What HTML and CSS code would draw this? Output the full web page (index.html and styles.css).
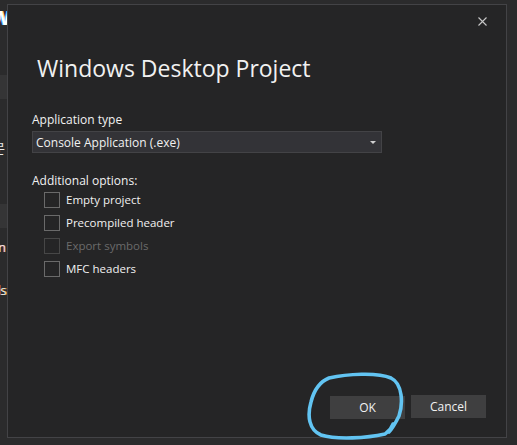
FILE: index.html
```html
<!DOCTYPE html>
<html lang="en">
  <head>
    <meta charset="UTF-8" />
    <title>Windows Desktop Project</title>
    <link rel="stylesheet" href="styles.css">
  </head>
  <body>
    <div class="screen">

      <!-- кусок окна студии слева -->
      <div class="behind">
        <div class="behind-logo">W</div>
        <div class="behind-band"></div>
        <div class="behind-text ko">문</div>
        <div class="behind-band second"></div>
        <div class="behind-text in">in</div>
        <div class="behind-text ls">ls</div>
      </div>

      <!-- сам диалог -->
      <div class="dialog">
        <div class="dialog-top">
          <svg class="close" width="9" height="9" viewBox="0 0 9 9">
            <path d="M0.5 0.5 L8.5 8.5 M8.5 0.5 L0.5 8.5" stroke="#c8c8c8" stroke-width="1.1" fill="none"/>
          </svg>
        </div>

        <h1 class="title">Windows Desktop Project</h1>

        <div class="field">
          <p class="label">Application type</p>
          <div class="select">
            <span>Console Application (.exe)</span>
            <span class="arrow"></span>
          </div>
        </div>

        <div class="field options">
          <p class="label">Additional options:</p>
          <label class="check"><span class="box"></span>Empty project</label>
          <label class="check"><span class="box"></span>Precompiled header</label>
          <label class="check disabled"><span class="box"></span>Export symbols</label>
          <label class="check"><span class="box"></span>MFC headers</label>
        </div>

        <div class="buttons">
          <div class="ok-wrap">
            <button class="btn">OK</button>
            <!-- обводка маркером -->
            <svg class="scribble" width="100" height="70" viewBox="0 0 100 70">
              <path d="M22 6 C40 2 70 0 84 6 C96 12 96 32 92 44 C88 52 86 56 82 60 M86 52 C84 58 80 60 78 62 C60 66 30 68 14 63 C2 58 0 44 4 30 C7 18 12 10 22 6"
                    stroke="#62c4f2" stroke-width="3.6" fill="none" stroke-linecap="round" stroke-linejoin="round"/>
            </svg>
          </div>
          <button class="btn">Cancel</button>
        </div>
      </div>

      <div class="behind-right"></div>
    </div>
  </body>
</html>
```

FILE: styles.css
```css
body {
  margin: 0;
  background-color: #2b2b2c;
  font-family: "Open Sans", "Noto Sans CJK KR", sans-serif;
  color: #f1f1f1;
}

.screen {
  display: flex;
  width: 517px;
  height: 445px;
  overflow: hidden;
}

/* фон позади диалога */
.behind {
  width: 7px;
  flex-shrink: 0;
  overflow: hidden;
  position: relative;
  background-color: #2b2b2c;
}

.behind-logo {
  position: absolute;
  left: -9px;
  top: 4px;
  font-size: 20px;
  font-weight: bold;
  color: #ffffff;
  text-shadow: -1px 0 #4fb3ff, 1px 0 #ffcf7a;
}

.behind-band {
  position: absolute;
  left: 0;
  top: 75px;
  width: 7px;
  height: 24px;
  background-color: #353536;
}

.behind-band.second {
  top: 204px;
}

.behind-text {
  position: absolute;
  font-size: 13px;
  color: #e8e8e8;
}

.behind-text.ko {
  left: -7px;
  top: 138px;
}

.behind-text.in {
  left: -5px;
  top: 238px;
  text-shadow: -1px 0 #e05a4a;
}

.behind-text.ls {
  left: -3px;
  top: 281px;
  text-shadow: 1px 0 #e0a040;
}

.behind-right {
  flex: 1;
  background-color: #2b2b2c;
}

.dialog {
  box-sizing: border-box;
  width: 500px;
  height: 434px;
  margin-top: 4px;
  flex-shrink: 0;
  background-color: #252526;
  border: 1px solid #434346;
  display: flex;
  flex-direction: column;
  padding: 0 20px 0 24px;
}

.dialog-top {
  display: flex;
  justify-content: flex-end;
  padding-top: 12px;
  height: 30px;
  box-sizing: border-box;
  margin-right: -1px;
}

.title {
  margin: 17px 0 0 5px;
  font-size: 23px;
  font-weight: normal;
  line-height: 32px;
  color: #f1f1f1;
}

.field {
  margin-top: 28px;
}

.label {
  margin: 0 0 3px 0;
  font-size: 12px;
  line-height: 16px;
}

.select {
  width: 350px;
  height: 22px;
  box-sizing: border-box;
  background-color: #333337;
  border: 1px solid #434346;
  display: flex;
  align-items: center;
  justify-content: space-between;
  padding: 0 4px 0 3px;
  font-size: 12px;
}

.arrow {
  width: 0;
  height: 0;
  border-left: 3px solid transparent;
  border-right: 3px solid transparent;
  border-top: 3px solid #d0d0d0;
  margin-right: 1px;
}

.options {
  margin-top: 21px;
}

.options .label {
  margin-bottom: 0;
  line-height: 14px;
}

.check {
  display: flex;
  align-items: center;
  height: 23px;
  padding-left: 12px;
  font-size: 11.5px;
}

.box {
  width: 16px;
  height: 16px;
  box-sizing: border-box;
  border: 1px solid #6a6a6a;
  margin-right: 6px;
}

.check.disabled {
  color: #6b6b6b;
}

.check.disabled .box {
  border-color: #474747;
}

.buttons {
  margin-top: auto;
  margin-bottom: 18px;
  display: flex;
  justify-content: flex-end;
  gap: 6px;
}

.ok-wrap {
  position: relative;
}

.btn {
  width: 75px;
  height: 23px;
  border: none;
  background-color: #3f3f40;
  color: #f1f1f1;
  font-family: "Open Sans", sans-serif;
  font-size: 12px;
  padding: 0;
}

.scribble {
  position: absolute;
  left: -23px;
  top: -23px;
}
```
